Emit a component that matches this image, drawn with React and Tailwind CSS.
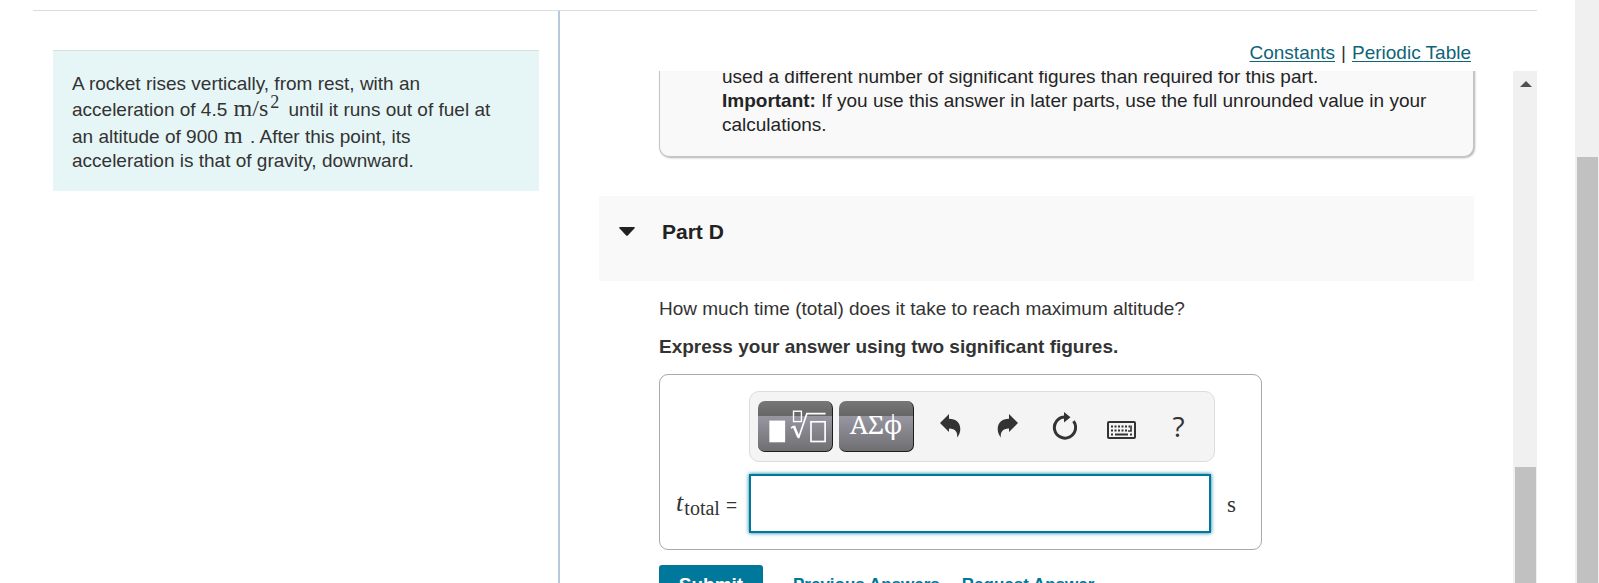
import React from "react";

function PageScrollbar() {
  return (
    <div className="flex w-6 shrink-0 flex-col bg-[#f0f0f0] pr-px pl-0.5 pt-[157px]" aria-hidden="true">
      <div className="flex-1 bg-[#c1c1c1]" />
    </div>
  );
}

function PanelScrollbar() {
  return (
    <div className="flex w-6 shrink-0 flex-col bg-[#f0f0f0] pr-px pl-0.5" aria-hidden="true">
      <svg className="mx-auto mt-2.5 h-1.5 w-3" viewBox="0 0 12 6">
        <path d="M0 6 6 0l6 6z" fill="#505050" />
      </svg>
      <div className="mt-[380px] flex-1 bg-[#c1c1c1]" />
    </div>
  );
}

function Unit({ children }) {
  return <span className="pr-0.5 pl-px font-['Liberation_Serif',serif] text-[24px] leading-none">{children}</span>;
}

function Problem() {
  return (
    <aside className="w-[525px] shrink-0 pt-[39px] pr-[19px] pl-5">
      <div className="border-t border-[#dcdfdf] bg-[#e6f6f7] px-[19px] pt-5 pb-[18px]">
        <p className="leading-[25px]">A rocket rises vertically, from rest, with an</p>
        <p className="leading-[27px]">
          acceleration of 4.5 <Unit>m/s</Unit>
          <sup className="relative -top-2 pr-1 align-baseline font-['Liberation_Serif',serif] text-[18px] leading-none">
            2
          </sup>{" "}
          until it runs out of fuel at
        </p>
        <p className="leading-[25px]">
          an altitude of 900 <Unit>m</Unit> . After this point, its
        </p>
        <p className="leading-6">acceleration is that of gravity, downward.</p>
      </div>
    </aside>
  );
}

function Feedback() {
  return (
    <div className="-mt-1.5 ml-[60px] rounded-b-[10px] border border-t-0 border-[#c4c4c4] bg-[#f9f9f9] pr-6 pb-[19px] pl-[62px] text-[#242424] shadow-[1px_1px_2px_rgba(0,0,0,0.3)]">
      <p>used a different number of significant figures than required for this part.</p>
      <p>
        <strong>Important:</strong> If you use this answer in later parts, use the full unrounded value in your
        calculations.
      </p>
    </div>
  );
}

const darkButton =
  "flex h-[51px] w-[75px] items-center justify-center rounded-[7px] border-r border-b border-[#1d1d1d] bg-[linear-gradient(to_bottom,#777_0,#666_15px,#9796a2_15px,#6f6f72_100%)] text-white";
const iconButton = "flex h-10 w-[57px] items-center justify-center text-[#333]";

function Toolbar() {
  return (
    <div className="flex h-[71px] items-center rounded-[10px] border border-[#dcdcdc] bg-[#f4f4f4] pl-2" role="toolbar">
      <button type="button" aria-label="Templates" className={darkButton}>
        <svg className="h-[51px] w-[75px]" viewBox="0 0 75 51" fill="none" stroke="#fff">
          <rect x="11.500" y="19.500" width="16" height="22" fill="#fff" stroke="none" />
          <rect x="36" y="10" width="8" height="10.500" strokeWidth="1.400" />
          <path d="M33.500 27 36.500 25.200" strokeWidth="1.600" />
          <path d="M36.300 25 41 36.500" strokeWidth="2.600" />
          <path d="M41 37.500 49.500 12.500H68.500" strokeWidth="1.700" />
          <rect x="53.700" y="20.700" width="14.300" height="20" strokeWidth="1.700" />
        </svg>
      </button>
      <button type="button" className={`${darkButton} ml-1.5 pb-1 font-['Noto_Serif','Liberation_Serif',serif] text-[26px]`}>
        ΑΣϕ
      </button>
      <div className="ml-2 flex pb-0.5">
        <button type="button" aria-label="Undo" className={iconButton}>
          <svg className="h-6 w-[21px]" viewBox="0 0 21 24" fill="currentColor">
            <path d="M0 9 9 0v4.800c7 0 11.300 3.800 11.300 10.200 0 3.400-1.300 6.300-3.300 8.600 1-5.400-1.400-9-8-9.200V18z" />
          </svg>
        </button>
        <button type="button" aria-label="Redo" className={iconButton}>
          <svg className="h-6 w-[21px]" viewBox="0 0 21 24" fill="currentColor">
            <path d="M21 9 12 0v4.800C5 4.800.7 8.600.7 15c0 3.400 1.300 6.300 3.300 8.600-1-5.400 1.400-9 8-9.200V18z" />
          </svg>
        </button>
        <button type="button" aria-label="Reset" className={iconButton}>
          <svg className="h-7 w-[25px]" viewBox="0 0 25 28" fill="none">
            <path d="M13 4.900A10.600 10.600 0 1 0 21.500 9.200" stroke="currentColor" strokeWidth="3" />
            <path d="M12 0 18.500 5.200 12 10.500z" fill="currentColor" />
          </svg>
        </button>
        <button type="button" aria-label="Keyboard shortcuts" className={iconButton}>
          <svg className="mt-2 h-[18px] w-[29px]" viewBox="0 0 29 18" fill="none" stroke="currentColor">
            <rect x="1" y="1" width="27" height="16" rx="1" strokeWidth="2" />
            <path d="M4 5.500H23M4 9.500H21" strokeWidth="2" strokeDasharray="2 1.500" />
            <path d="M24 4.500V10H21" strokeWidth="1.600" />
            <path d="M4 13.500h2M8 13.500H21M23 13.500h2" strokeWidth="2" />
          </svg>
        </button>
        <button type="button" aria-label="Help" className={`${iconButton} font-['Open_Sans','Noto_Sans',sans-serif] text-[28px]`}>
          ?
        </button>
      </div>
    </div>
  );
}

function Answer() {
  return (
    <div className="mt-[15px] grid w-[603px] grid-cols-[89px_466px_1fr] items-center gap-y-3 rounded-[9px] border border-[#a9a9a9] py-4">
      <div className="col-start-2">
        <Toolbar />
      </div>
      <label htmlFor="answer" className="col-start-1 flex items-baseline justify-end pr-3">
        <span className="font-['Liberation_Serif',serif] text-[26px] italic">t</span>
        <span className="relative top-1 ml-px font-['Liberation_Serif',serif] text-[20px]">total</span>
        <span className="ml-1.5">=</span>
      </label>
      <input
        id="answer"
        type="text"
        className="h-[59px] w-[462px] border-2 border-[#00789b] bg-white px-3 shadow-[0_0_4px_#00789b] outline-none"
      />
      <span className="pl-3 pt-0.5 font-['Liberation_Serif',serif] text-[23px]">s</span>
    </div>
  );
}

export default function App() {
  return (
    <div className="flex h-screen overflow-hidden bg-white font-['Liberation_Sans',Arial,sans-serif] text-[19px] leading-6 text-[#333]">
      <div className="mt-2.5 mr-[38px] ml-[33px] flex min-w-0 flex-1 border-t border-[#dcdcdc]">
        <Problem />
        <main className="flex min-w-0 flex-1 flex-col border-l-2 border-[#b8c9da]">
          <nav className="flex h-[60px] shrink-0 justify-end gap-1.5 pt-[30px] pr-[66px]">
            <a href="#constants" className="text-[#0f6478] underline underline-offset-2">Constants</a>
            <span>|</span>
            <a href="#periodic-table" className="text-[#0f6478] underline underline-offset-2">Periodic Table</a>
          </nav>
          <div className="flex min-h-0 flex-1">
            <div className="min-w-0 flex-1 overflow-hidden px-[39px]">
              <Feedback />
              <section className="mt-[39px]">
                <h2 className="h-[85px] bg-[#f9f9f9] text-[21px] font-bold text-[#222]">
                  <button type="button" aria-expanded="true" className="flex items-center pt-6 pl-5">
                    <svg className="mb-0.5 h-[9px] w-4" viewBox="0 0 15 9" preserveAspectRatio="none" aria-hidden="true">
                      <path d="M1 0h13q1.500 0 .6 1.200L8.500 8.200q-1 1-2 0L.4 1.200Q-.5 0 1 0z" fill="#222" />
                    </svg>
                    <span className="ml-[27px]">Part D</span>
                  </button>
                </h2>
                <div className="pt-4 pl-[60px]">
                  <p>How much time (total) does it take to reach maximum altitude?</p>
                  <p className="mt-3.5 font-bold">Express your answer using two significant figures.</p>
                  <Answer />
                  <div className="mt-[15px] flex items-center font-bold text-[#00789b]">
                    <button type="button" className="h-10 w-[104px] rounded-[3px] bg-[#00789b] text-white">Submit</button>
                    <div className="ml-[30px] flex gap-[22px] text-[17px]">
                      <a href="#previous">Previous Answers</a>
                      <a href="#request">Request Answer</a>
                    </div>
                  </div>
                </div>
              </section>
            </div>
            <PanelScrollbar />
          </div>
        </main>
      </div>
      <PageScrollbar />
    </div>
  );
}
